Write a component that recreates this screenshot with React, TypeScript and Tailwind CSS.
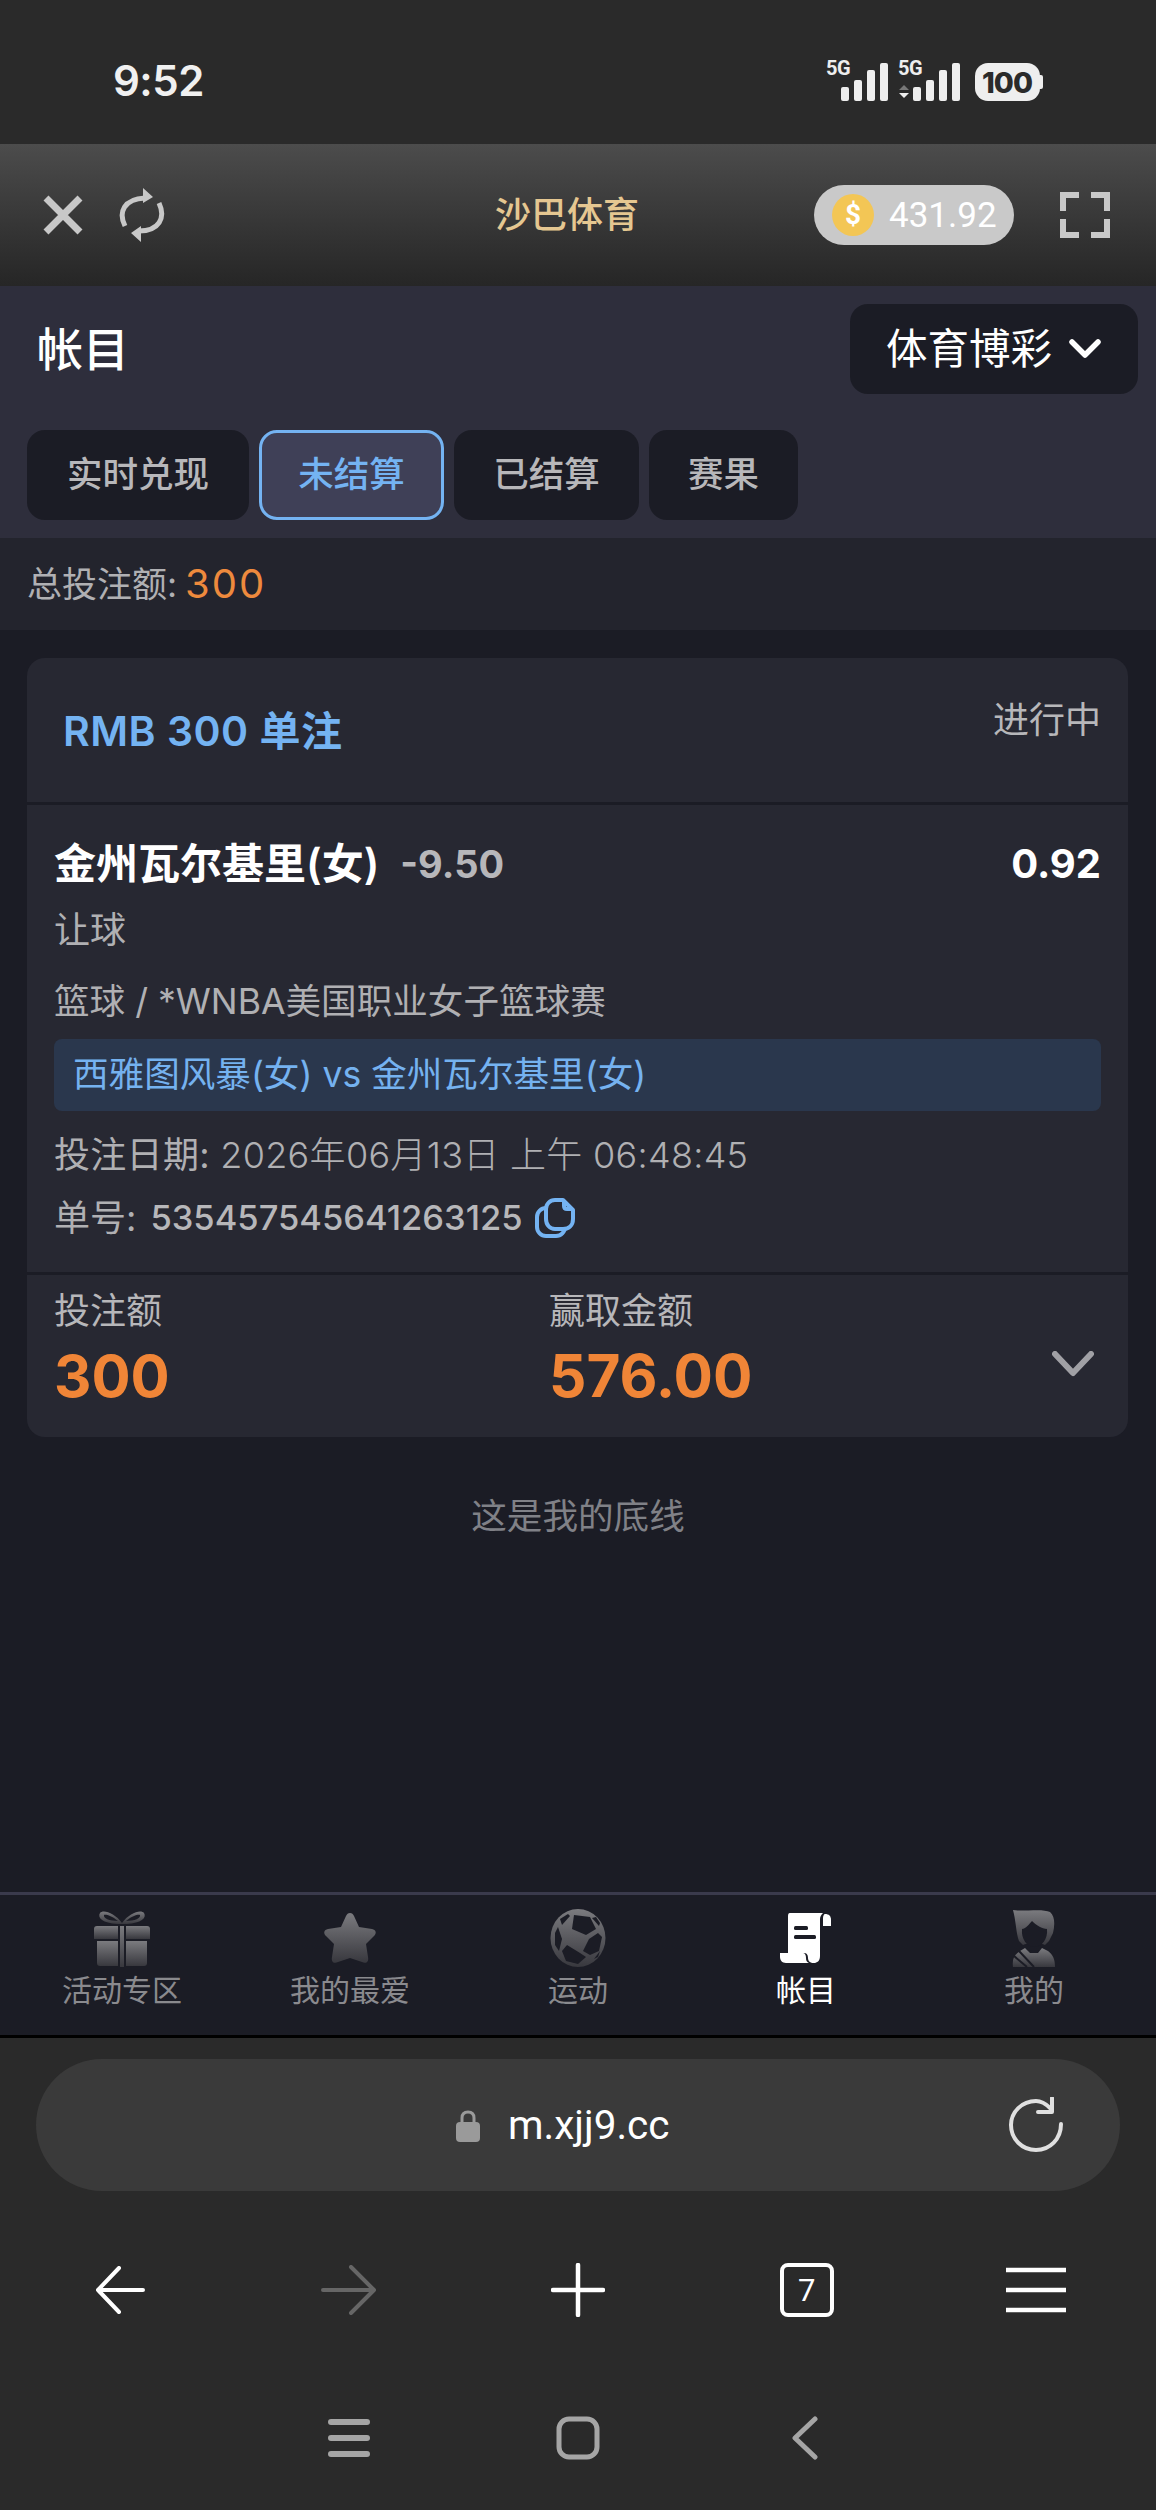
import React from "react";

const Grad = ({ id }: { id: string }) => (
  <linearGradient id={id} x1="0" y1="0" x2="0" y2="1">
    <stop offset="0" stopColor="#7b7b7f" />
    <stop offset="1" stopColor="#38383e" />
  </linearGradient>
);

const StatusIcons = () => (
  <svg width="222" height="50" viewBox="0 0 222 50" className="block">
    <g fill="#eeeeee">
      <text x="0" y="21" fontSize="20" fontWeight="700" fontFamily="Roboto, sans-serif" letterSpacing="-0.5">5G</text>
      <rect x="15" y="33" width="8" height="14" rx="2" />
      <rect x="28" y="26" width="8" height="21" rx="2" />
      <rect x="41" y="16" width="8" height="31" rx="2" />
      <rect x="54" y="9" width="8" height="38" rx="2" />
      <text x="72" y="21" fontSize="20" fontWeight="700" fontFamily="Roboto, sans-serif" letterSpacing="-0.5">5G</text>
      <path d="M78 31 L83 36 L73 36 Z" fill="#777" />
      <path d="M73 39 L83 39 L78 44 Z" />
      <rect x="87" y="33" width="8" height="14" rx="2" />
      <rect x="100" y="26" width="8" height="21" rx="2" />
      <rect x="113" y="16" width="8" height="31" rx="2" />
      <rect x="126" y="9" width="8" height="38" rx="2" />
      <rect x="149" y="9" width="65" height="38" rx="13" />
      <rect x="212" y="21" width="5" height="14" rx="2" />
      <text x="181" y="39" textAnchor="middle" fontSize="29" fontWeight="800" fill="#2a2a2a" fontFamily="Inter, sans-serif" letterSpacing="-1">100</text>
    </g>
  </svg>
);

const NavIcons = {
  gift: (
    <svg width="58" height="58" viewBox="0 0 58 58">
      <defs><Grad id="g1" /></defs>
      <g fill="url(#g1)">
        <path fillRule="evenodd" d="M29 14 C22 4 10 0 7 4 C4 9 10 14 24 15 L34 15 C48 14 54 9 51 4 C48 0 36 4 29 14 Z M25 12 C18 6 12 5 11 6 C10 9 16 12 25 12 Z M33 12 C40 6 46 5 47 6 C48 9 42 12 33 12 Z" />
        <path d="M4 17 H25 V30 H1 V20 C1 18 2 17 4 17 Z" />
        <path d="M33 17 H54 C56 17 57 18 57 20 V30 H33 Z" />
        <rect x="27" y="17" width="4" height="41" />
        <path d="M4 32 H25 V57 H7 C5 57 4 56 4 54 Z" />
        <path d="M33 32 H54 V54 C54 56 53 57 51 57 H33 Z" />
      </g>
    </svg>
  ),
  star: (
    <svg width="54" height="52" viewBox="0 0 54 52">
      <defs><Grad id="g2" /></defs>
      <path fill="url(#g2)" d="M27 1 C29 1 30 2 31 4 L36 15 L49 17 C53 18 54 21 51 24 L43 32 L45 45 C46 50 43 52 39 50 L27 46 L15 50 C11 52 8 50 9 45 L11 32 L3 24 C0 21 1 18 5 17 L18 15 L23 4 C24 2 25 1 27 1 Z" />
    </svg>
  ),
  ball: (
    <svg width="56" height="58" viewBox="0 0 56 58">
      <defs><Grad id="g3" /></defs>
      <ellipse cx="28" cy="29" rx="27.5" ry="29" fill="url(#g3)" />
      <g fill="#1b1c25">
        <path d="M24 6 L40 8 L46 20 L36 26 L22 20 Z" />
        <path d="M39 30 L48 24 L52 28 L49 42 L40 46 L33 42 Z" />
        <path d="M17 36 L30 44 L36 48 L28 55 L16 52 L12 42 Z" />
        <path d="M5 24 L8 18 L12 30 L9 42 L5 36 Z" />
        <path d="M10 10 L18 5 L20 7 L12 16 Z" />
        <path d="M46 8 L50 14 L49 17 L42 9 Z" />
        <path d="M44 50 L50 42 L48 48 Z" />
      </g>
    </svg>
  ),
  scroll: (
    <svg width="52" height="52" viewBox="0 0 52 52">
      <g fill="#ffffff">
        <path d="M10 1 H43 C41 3 40 5 40 7 V44 C40 49 37 51 34 51 C30 51 28 49 28 46 C28 42 26 41 24 41 H8 V5 C8 3 8 1 10 1 Z" />
        <path d="M45 2 C49 2 51 4 51 8 V14 H43 V6 C43 4 44 2 45 2 Z" />
        <path d="M0 41 H23 C25 41 26 43 26 46 C26 49 27 50 29 51 H6 C2 51 0 48 0 45 Z" />
      </g>
      <rect x="14" y="14" width="14" height="4" rx="1.5" fill="#1b1c25" />
      <rect x="14" y="23" width="22" height="4" rx="1.5" fill="#1b1c25" />
    </svg>
  ),
  man: (
    <svg width="44" height="58" viewBox="0 0 44 58">
      <defs><Grad id="g4" /></defs>
      <path fill="url(#g4)" d="M1 1 C10 3 30 -1 38 3 C43 7 43 16 41 24 L37 32 L33 36 C30 34 14 34 11 36 L7 32 C4 24 4 12 1 1 Z" />
      <path fill="#1b1c25" d="M10 20 C14 20 18 14 20 12 C24 16 30 20 35 20 C36 30 30 38 22 38 C15 38 9 30 10 20 Z" />
      <path fill="url(#g4)" d="M1 58 C0 50 2 46 8 42 L13 39 L18 44 L26 44 L30 39 L36 42 C41 46 43 50 43 58 Z" />
      <path stroke="#1b1c25" strokeWidth="2" fill="none" d="M2 47 L15 58 M7 42 L22 58" />
      <path fill="#1b1c25" d="M17 41 L27 41 L25 44 L19 44 Z" />
    </svg>
  ),
};

const navItems = [
  { k: "gift", t: "活动专区" },
  { k: "star", t: "我的最爱" },
  { k: "ball", t: "运动" },
  { k: "scroll", t: "帐目", active: true },
  { k: "man", t: "我的" },
] as const;

export default function App() {
  return (
    <div className="w-[1156px] h-[2510px] flex flex-col bg-[#1b1c25] overflow-hidden font-['Inter','Noto_Sans_CJK_SC',sans-serif]">
      {/* Status bar */}
      <div className="h-[144px] shrink-0 bg-[#2a2a2a] flex items-center pl-[113px] pr-[108px] pt-[18px]">
        <span className="text-[42px] leading-[50px] font-semibold text-[#f0f0f0] tracking-[-0.5px]">9:52</span>
        <div className="ml-auto mb-[4px]"><StatusIcons /></div>
      </div>

      {/* App header */}
      <div className="h-[142px] shrink-0 bg-gradient-to-b from-[#4c4c4c] to-[#262626] flex items-center pl-[43px] pr-[46px]">
        <svg width="40" height="40" viewBox="0 0 40 40">
          <path d="M3 3 L37 37 M37 3 L3 37" stroke="#c8c8c8" strokeWidth="7" />
        </svg>
        <svg width="46" height="54" viewBox="0 0 46 54" className="ml-[36px]">
          <g fill="none" stroke="#c8c8c8" strokeWidth="5">
            <path d="M6 38 C-1 24 5 11 26 10" />
            <path d="M40 15 C47 30 40 43 20 43" />
          </g>
          <path d="M24 0 L34 9 L24 15 Z M22 38 L12 45 L22 54 Z" fill="#c8c8c8" />
        </svg>
        <span className="ml-[330px] text-[36px] leading-[50px] font-medium text-[#e5c791]">沙巴体育</span>
        <div className="ml-auto w-[200px] h-[60px] rounded-full bg-[#c9c9c9] flex items-center pl-[18px]">
          <span className="w-[42px] h-[42px] rounded-full bg-[#f3c655] flex items-center justify-center text-white text-[28px] font-bold font-['Roboto',sans-serif]">$</span>
          <span className="ml-[15px] text-white text-[35px] leading-none font-['Roboto',sans-serif]">431.92</span>
        </div>
        <svg width="50" height="46" viewBox="0 0 50 46" className="ml-[46px]">
          <path d="M3 19 V3 H19 M31 3 H47 V19 M3 27 V43 H19 M31 43 H47 V27" fill="none" stroke="#c8c8c8" strokeWidth="6" />
        </svg>
      </div>

      {/* Title and tabs */}
      <div className="h-[252px] shrink-0 bg-[#2e2e3c] px-[27px] pt-[18px]">
        <div className="flex items-center justify-between h-[90px]">
          <span className="ml-[10px] text-[46px] leading-[60px] font-medium text-white">帐目</span>
          <div className="mr-[-9px] w-[288px] h-[90px] rounded-[18px] bg-[#1b1c25] flex items-center pl-[36px]">
            <span className="text-[41.5px] leading-[50px] text-white">体育博彩</span>
            <svg width="32" height="20" viewBox="0 0 32 20" className="ml-[17px]">
              <path d="M3 3 L16 16 L29 3" fill="none" stroke="#ffffff" strokeWidth="5.5" strokeLinecap="round" strokeLinejoin="round" />
            </svg>
          </div>
        </div>
        <div className="flex gap-[10px] mt-[36px]">
          <div className="w-[222px] h-[90px] rounded-[18px] bg-[#1b1c25] flex items-center justify-center text-[35.5px] font-medium text-[#b7b7ba]">实时兑现</div>
          <div className="w-[185px] h-[90px] rounded-[18px] bg-[#3f4057] border-[3px] border-[#74b3f2] flex items-center justify-center text-[35.5px] font-medium text-[#74b3f2]">未结算</div>
          <div className="w-[185px] h-[90px] rounded-[18px] bg-[#1b1c25] flex items-center justify-center text-[35.5px] font-medium text-[#b7b7ba]">已结算</div>
          <div className="w-[149px] h-[90px] rounded-[18px] bg-[#1b1c25] flex items-center justify-center text-[35.5px] font-medium text-[#b7b7ba]">赛果</div>
        </div>
      </div>

      {/* Total */}
      <div className="h-[92px] shrink-0 bg-[#23242d] flex items-center pl-[27px]">
        <span className="text-[35px] text-[#b0b0b3]">总投注额:</span>
        <span className="text-[40px] text-[#ee8a3d] ml-[8px] tracking-[2px]">300</span>
      </div>

      {/* Body */}
      <div className="flex-1 flex flex-col px-[27px] pt-[28px]">
        <div className="w-[1101px] rounded-[18px] bg-[#272832] flex flex-col overflow-hidden">
          <div className="h-[144px] flex justify-between pl-[36px] pr-[27px]">
            <span className="mt-[48px] text-[41px] leading-[50px] font-semibold text-[#74b3f2] tracking-[0.5px]">RMB 300 单注</span>
            <span className="mt-[37px] text-[36px] leading-[50px] text-[#b7b7ba]">进行中</span>
          </div>
          <div className="h-[3px] bg-[#1b1c25]" />
          <div className="h-[467px] px-[27px] pt-[34px] flex flex-col">
            <div className="flex items-center h-[50px]">
              <span className="text-[42px] leading-[50px] font-semibold text-white">金州瓦尔基里(女)</span>
              <span className="ml-[21px] text-[38px] leading-[50px] font-bold text-[#b7b7ba]">-9.50</span>
              <span className="ml-auto text-[40px] leading-[50px] font-bold text-white">0.92</span>
            </div>
            <div className="mt-[16px] text-[36px] leading-[50px] text-[#b0b0b3]">让球</div>
            <div className="mt-[22px] text-[35.6px] leading-[50px] text-[#b0b0b3]">篮球 / *WNBA美国职业女子篮球赛</div>
            <div className="mt-[12px] h-[72px] rounded-[8px] bg-[#2a374d] flex items-center pl-[19px] text-[35.6px] text-[#75b2f0]">西雅图风暴(女) vs 金州瓦尔基里(女)</div>
            <div className="mt-[19px] text-[36px] leading-[50px] text-[#b0b0b3] tracking-[0.3px]">投注日期: <span className="font-light">2026年06月13日 上午 06:48:45</span></div>
            <div className="mt-[13px] flex items-center h-[50px]">
              <span className="text-[36px] leading-[50px] text-[#b0b0b3]">单号:</span>
              <span className="ml-[14px] text-[34.5px] leading-[50px] font-medium text-[#b7b7ba]">535457545641263125</span>
              <svg width="40" height="40" viewBox="0 0 40 40" className="ml-[12px]">
                <g fill="none" stroke="#74b3f2" strokeWidth="4" strokeLinejoin="round">
                  <rect x="2" y="10" width="28" height="28" rx="9" />
                  <path d="M20 2 H28 L38 12 V21 C38 27 34 31 28 31 H20 C15 31 11 27 11 21 V11 C11 6 15 2 20 2 Z" fill="#272832" />
                  <path d="M29 3 V8 C29 10 30 11 32 11 H37" />
                </g>
              </svg>
            </div>
          </div>
          <div className="h-[3px] bg-[#1b1c25]" />
          <div className="h-[162px] flex pl-[27px] pr-[34px] pt-[11px]">
            <div className="w-[495px] flex flex-col">
              <span className="text-[36px] leading-[50px] text-[#b7b7ba]">投注额</span>
              <span className="mt-[5px] text-[58px] leading-[70px] font-bold text-[#f08537]">300</span>
            </div>
            <div className="flex flex-col">
              <span className="text-[36px] leading-[50px] text-[#b7b7ba]">赢取金额</span>
              <span className="mt-[5px] text-[58.5px] leading-[70px] font-bold text-[#f08537]">576.00</span>
            </div>
            <svg width="42" height="26" viewBox="0 0 42 26" className="ml-auto mt-[65px]">
              <path d="M3 3 L21 22 L39 3" fill="none" stroke="#a0a0a5" strokeWidth="6" strokeLinecap="round" strokeLinejoin="round" />
            </svg>
          </div>
        </div>
        <div className="mt-[55px] text-center text-[35.6px] leading-[50px] text-[#808187]">这是我的底线</div>
      </div>

      {/* Bottom tab bar */}
      <div className="h-[3px] shrink-0 bg-[#3a3a4c]" />
      <div className="h-[140px] shrink-0 bg-[#1b1c25] grid grid-cols-5 px-[8px] pt-[12px]">
        {navItems.map((n) => (
          <div key={n.t} className="flex flex-col items-center">
            <div className="h-[62px] flex items-center justify-center">{NavIcons[n.k]}</div>
            <span className={`mt-[3px] text-[30px] leading-[36px] ${"active" in n ? "text-white" : "text-[#8a8a8e]"}`}>{n.t}</span>
          </div>
        ))}
      </div>
      <div className="h-[3px] shrink-0 bg-black" />

      {/* Browser chrome */}
      <div className="h-[472px] shrink-0 bg-[#2a2a2a] flex flex-col">
        <div className="mt-[21px] mx-[36px] h-[132px] rounded-[66px] bg-[#3a3a3a] flex items-center pl-[420px] pr-[56px]">
          <svg width="24" height="32" viewBox="0 0 24 32" className="mt-[2px]">
            <path d="M6 14 V8 C6 4 8 2 12 2 C16 2 18 4 18 8 V14" fill="none" stroke="#9a9a9a" strokeWidth="3" />
            <rect x="0" y="12" width="24" height="20" rx="4" fill="#9a9a9a" />
          </svg>
          <span className="ml-[28px] text-[40.5px] leading-[50px] text-white font-['Roboto',sans-serif]">m.xjj9.cc</span>
          <svg width="56" height="56" viewBox="0 0 56 56" className="ml-auto">
            <path d="M42 11 C37 6 33 4 28 4 C14 4 3 15 3 28 C3 42 14 53 28 53 C42 53 53 42 53 27" fill="none" stroke="#e0e0e0" strokeWidth="4" strokeLinecap="round" />
            <path d="M44 1 V15 H30" fill="none" stroke="#e0e0e0" strokeWidth="4" strokeLinecap="round" strokeLinejoin="round" />
          </svg>
        </div>
        <div className="h-[198px] grid grid-cols-5 items-center justify-items-center px-[6px]">
          <svg width="50" height="48" viewBox="0 0 50 48">
            <path d="M48 24 H3 M24 2 L3 24 L24 46" fill="none" stroke="#ffffff" strokeWidth="4" strokeLinecap="round" strokeLinejoin="round" />
          </svg>
          <svg width="56" height="50" viewBox="0 0 56 50">
            <path d="M2 25 H52 M30 2 L53 25 L30 48" fill="none" stroke="#666666" strokeWidth="4" strokeLinecap="round" strokeLinejoin="round" />
          </svg>
          <svg width="54" height="54" viewBox="0 0 54 54">
            <path d="M27 2 V52 M2 27 H52" fill="none" stroke="#ffffff" strokeWidth="4.5" strokeLinecap="round" />
          </svg>
          <div className="w-[54px] h-[54px] rounded-[8px] border-[4px] border-white flex items-center justify-center text-white text-[31px] leading-none font-['Roboto',sans-serif]">7</div>
          <svg width="60" height="46" viewBox="0 0 60 46">
            <path d="M0 3 H60 M0 23 H60 M0 43 H60" fill="none" stroke="#ffffff" strokeWidth="4.5" />
          </svg>
        </div>
        <div className="h-[98px] grid grid-cols-5 items-center justify-items-center px-[6px]">
          <span />
          <svg width="42" height="40" viewBox="0 0 42 40">
            <path d="M3 4 H39 M3 20 H39 M3 36 H39" fill="none" stroke="#a5a5a5" strokeWidth="6" strokeLinecap="round" />
          </svg>
          <svg width="44" height="44" viewBox="0 0 44 44">
            <rect x="3" y="3" width="38" height="38" rx="10" fill="none" stroke="#a5a5a5" strokeWidth="5" />
          </svg>
          <svg width="28" height="44" viewBox="0 0 28 44" className="mr-[5px]">
            <path d="M25 3 L5 22 L25 41" fill="none" stroke="#a5a5a5" strokeWidth="5" strokeLinecap="round" strokeLinejoin="round" />
          </svg>
          <span />
        </div>
      </div>
    </div>
  );
}
